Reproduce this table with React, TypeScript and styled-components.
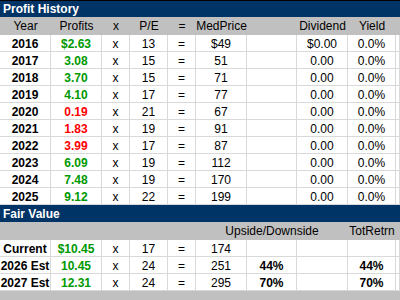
import styled, { createGlobalStyle } from 'styled-components';

const GlobalStyle = createGlobalStyle`
  html, body {
    margin: 0;
    padding: 0;
    background: #fff;
  }
  body {
    font-family: 'Liberation Sans', Arial, sans-serif;
    font-size: 12px;
    color: #000;
  }
`;

const columns = '51px 51px 28px 38px 28px 51px 50px 51px 48px 4px';

type Tone = 'green' | 'red' | 'plain';

const history: { year: string; eps: string; tone: Tone; pe: string; price: string; div: string }[] = [
  { year: '2016', eps: '$2.63', tone: 'green', pe: '13', price: '$49', div: '$0.00' },
  { year: '2017', eps: '3.08', tone: 'green', pe: '15', price: '51', div: '0.00' },
  { year: '2018', eps: '3.70', tone: 'green', pe: '15', price: '71', div: '0.00' },
  { year: '2019', eps: '4.10', tone: 'green', pe: '17', price: '77', div: '0.00' },
  { year: '2020', eps: '0.19', tone: 'red', pe: '21', price: '67', div: '0.00' },
  { year: '2021', eps: '1.83', tone: 'red', pe: '19', price: '91', div: '0.00' },
  { year: '2022', eps: '3.99', tone: 'red', pe: '17', price: '87', div: '0.00' },
  { year: '2023', eps: '6.09', tone: 'green', pe: '19', price: '112', div: '0.00' },
  { year: '2024', eps: '7.48', tone: 'green', pe: '19', price: '170', div: '0.00' },
  { year: '2025', eps: '9.12', tone: 'green', pe: '22', price: '199', div: '0.00' },
];

const fair = [
  { label: 'Current', eps: '$10.45', pe: '17', price: '174', up: '', ret: '' },
  { label: '2026 Est', eps: '10.45', pe: '24', price: '251', up: '44%', ret: '44%' },
  { label: '2027 Est', eps: '12.31', pe: '24', price: '295', up: '70%', ret: '70%' },
];

export default function App() {
  return (
    <>
      <GlobalStyle />
      <Sheet>
        <TitleBar $top>Profit History</TitleBar>
        <HeadRow>
          <HeadCell>Year</HeadCell>
          <HeadCell>Profits</HeadCell>
          <HeadCell>x</HeadCell>
          <HeadCell>P/E</HeadCell>
          <HeadCell>=</HeadCell>
          <HeadCell>MedPrice</HeadCell>
          <HeadCell />
          <HeadCell>Dividend</HeadCell>
          <HeadCell>Yield</HeadCell>
          <HeadCell />
        </HeadRow>
        {history.map((r) => (
          <Row key={r.year}>
            <Cell $bold>{r.year}</Cell>
            <Cell $bold $tone={r.tone}>{r.eps}</Cell>
            <Cell>x</Cell>
            <Cell>{r.pe}</Cell>
            <Cell>=</Cell>
            <Cell>{r.price}</Cell>
            <Cell />
            <Cell>{r.div}</Cell>
            <Cell>0.0%</Cell>
            <Cell />
          </Row>
        ))}

        <TitleBar>Fair Value</TitleBar>
        <HeadRow>
          <HeadCell />
          <HeadCell />
          <HeadCell />
          <HeadCell />
          <HeadCell />
          <HeadCell />
          <HeadCell $overflow>Upside/Downside</HeadCell>
          <HeadCell />
          <HeadCell>TotRetrn</HeadCell>
          <HeadCell />
        </HeadRow>
        {fair.map((r) => (
          <Row key={r.label}>
            <Cell $bold>{r.label}</Cell>
            <Cell $bold $tone="green">{r.eps}</Cell>
            <Cell>x</Cell>
            <Cell>{r.pe}</Cell>
            <Cell>=</Cell>
            <Cell>{r.price}</Cell>
            <Cell $bold>{r.up}</Cell>
            <Cell />
            <Cell $bold>{r.ret}</Cell>
            <Cell />
          </Row>
        ))}
        <Footer />
      </Sheet>
    </>
  );
}

const Sheet = styled.div`
  width: 400px;
  height: 300px;
  overflow: hidden;
  display: flex;
  flex-direction: column;
`;

const TitleBar = styled.div<{ $top?: boolean }>`
  height: 16px;
  background: #003366;
  border-top: 1px solid ${(p) => (p.$top ? '#000' : '#003366')};
  color: #fff;
  font-weight: 700;
  font-size: 12px;
  line-height: 16px;
  padding-left: 3px;
  white-space: nowrap;
`;

const HeadRow = styled.div`
  display: grid;
  grid-template-columns: ${columns};
  height: 18px;
  background: #c0c0c0;
`;

const HeadCell = styled.div<{ $overflow?: boolean }>`
  display: flex;
  align-items: center;
  justify-content: center;
  white-space: nowrap;
  overflow: ${(p) => (p.$overflow ? 'visible' : 'hidden')};
  line-height: 18px;
`;

const Row = styled.div`
  display: grid;
  grid-template-columns: ${columns};
  height: 17px;
`;

const toneColor: Record<Tone, string> = {
  green: '#009900',
  red: '#ff0000',
  plain: '#000',
};

const Cell = styled.div<{ $bold?: boolean; $tone?: Tone }>`
  box-sizing: border-box;
  border-right: 1px solid #d9d9d9;
  border-bottom: 1px solid #d9d9d9;
  display: flex;
  align-items: center;
  justify-content: center;
  white-space: nowrap;
  padding-top: 1px;
  font-weight: ${(p) => (p.$bold ? 700 : 400)};
  color: ${(p) => toneColor[p.$tone ?? 'plain']};
`;

const Footer = styled.div`
  flex: 1;
  background: #c0c0c0;
`;
